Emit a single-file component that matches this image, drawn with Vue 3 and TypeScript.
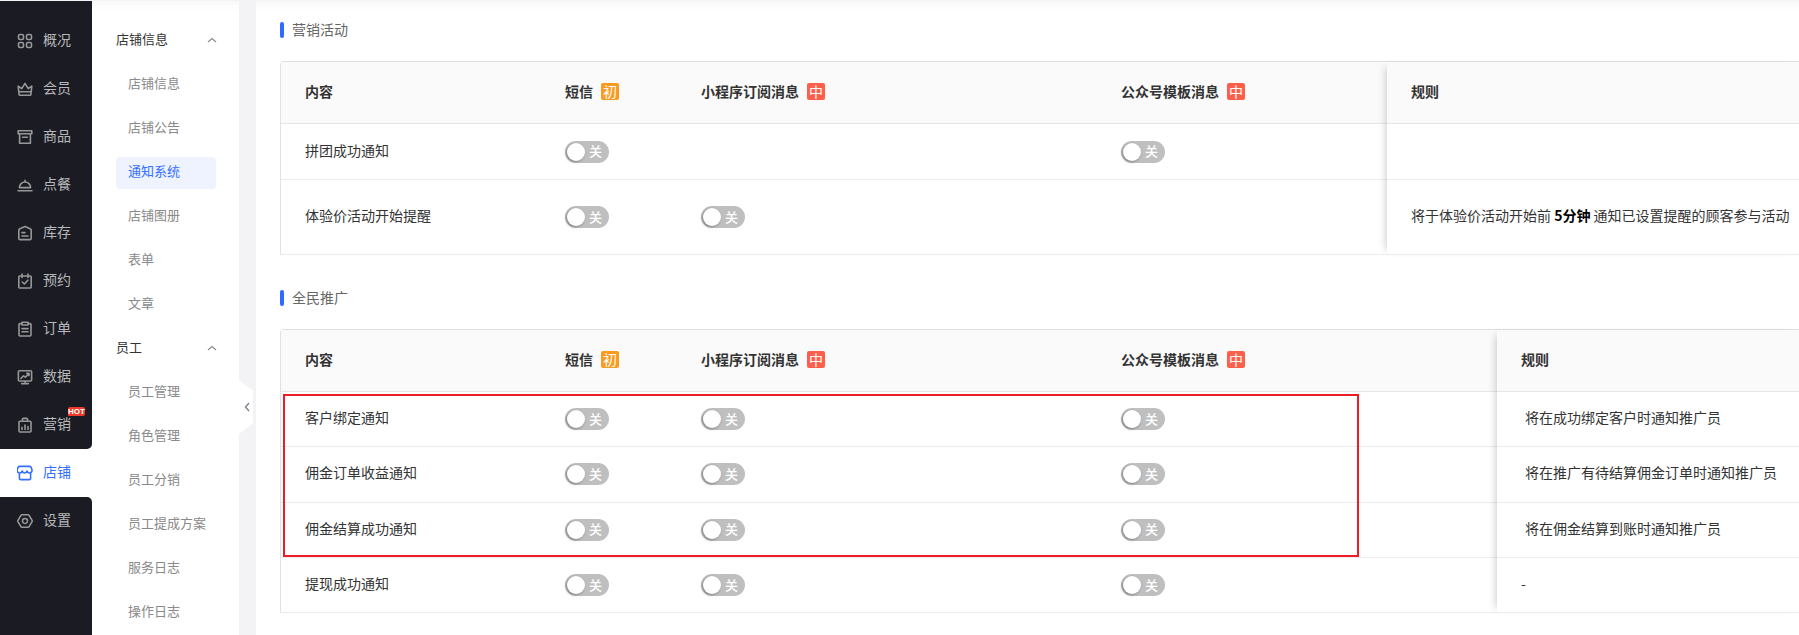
<script setup lang="ts">
interface RailItem {
  label: string
  icon: string
  hot?: boolean
}
interface NotifyRow {
  name: string
  switches: boolean[]
  rule?: string
  height: number
}

const icons = {
  overview:
    'M3 1.5h2a1.5 1.5 0 0 1 1.5 1.5v2A1.5 1.5 0 0 1 5 6.5H3A1.5 1.5 0 0 1 1.5 5V3A1.5 1.5 0 0 1 3 1.5ZM11 1.5h2A1.5 1.5 0 0 1 14.5 3v2A1.5 1.5 0 0 1 13 6.5h-2A1.5 1.5 0 0 1 9.5 5V3A1.5 1.5 0 0 1 11 1.5ZM3 9.5h2A1.5 1.5 0 0 1 6.5 11v2A1.5 1.5 0 0 1 5 14.5H3A1.5 1.5 0 0 1 1.5 13v-2A1.5 1.5 0 0 1 3 9.5ZM11 9.5h2a1.5 1.5 0 0 1 1.5 1.5v2a1.5 1.5 0 0 1-1.5 1.5h-2A1.5 1.5 0 0 1 9.5 13v-2A1.5 1.5 0 0 1 11 9.5Z',
  member: 'M1.2 5.2 4.8 7.6 8 2.4l3.2 5.2 3.6-2.4-.9 8.2a1 1 0 0 1-1 .9H3.1a1 1 0 0 1-1-.9ZM2.6 10.8h10.8',
  goods: 'M1.2 1.8h13.6v3H1.2ZM2.6 4.8v9.4h10.8V4.8M5.6 8.2h4.8',
  dining: 'M2.4 10.6a5.6 5.6 0 0 1 11.2 0ZM8 5V3.2M1 13.8h14',
  stock: 'M8 1.4 13.6 4a1 1 0 0 1 .6.9v8.7a1 1 0 0 1-1 1H2.8a1 1 0 0 1-1-1V4.9a1 1 0 0 1 .6-.9ZM5 7.6h3M5 11h6',
  booking: 'M2.8 3h10.4a1 1 0 0 1 1 1v10a1 1 0 0 1-1 1H2.8a1 1 0 0 1-1-1V4a1 1 0 0 1 1-1ZM5 1v3.4M11 1v3.4M5.2 9 7.4 11l3.4-3.8',
  order: 'M5 2.6H3a1 1 0 0 0-1 1V14a1 1 0 0 0 1 1h10a1 1 0 0 0 1-1V3.6a1 1 0 0 0-1-1h-2M5 1.2h6v2.8H5ZM5 7.6h6M5 10.8h6',
  data: 'M2.4 1.8h11.2a1 1 0 0 1 1 1V11a1 1 0 0 1-1 1H2.4a1 1 0 0 1-1-1V2.8a1 1 0 0 1 1-1ZM8 12v2.6M4.6 14.6h6.8M4 9.4l2.6-2.6 1.8 1.4L12 4.6M9.8 4.4H12v2.2',
  marketing: 'M3 4.2h10a1 1 0 0 1 1 1V14a1 1 0 0 1-1 1H3a1 1 0 0 1-1-1V5.2a1 1 0 0 1 1-1ZM5.4 4.2V2.4a1 1 0 0 1 1-1h3.2a1 1 0 0 1 1 1v1.8M5 12.4v-2M8 12.4V8M11 12.4V9.6',
  shop: 'M3.2 1.4h9.6a1.5 1.5 0 0 1 1.4 1l.8 2.6c.3 1.7-1 3-2.4 3-1.2 0-2.3-.8-2.6-2-.3 1.2-1.3 2-2.4 2s-2.1-.8-2.4-2c-.3 1.2-1.4 2-2.6 2-1.4 0-2.7-1.3-2.4-3l.8-2.6a1.5 1.5 0 0 1 1.4-1ZM2.4 8v5.6a1 1 0 0 0 1 1h9.2a1 1 0 0 0 1-1V8',
  settings: 'M4.8 1.8h6.4a.8.8 0 0 1 .7.4l3.3 5.4a.8.8 0 0 1 0 .8l-3.3 5.4a.8.8 0 0 1-.7.4H4.8a.8.8 0 0 1-.7-.4L.8 8.4a.8.8 0 0 1 0-.8l3.3-5.4a.8.8 0 0 1 .7-.4ZM8 5.5a2.5 2.5 0 1 0 0 5 2.5 2.5 0 0 0 0-5Z',
}

const railTop: RailItem[] = [
  { label: '概况', icon: icons.overview },
  { label: '会员', icon: icons.member },
  { label: '商品', icon: icons.goods },
  { label: '点餐', icon: icons.dining },
  { label: '库存', icon: icons.stock },
  { label: '预约', icon: icons.booking },
  { label: '订单', icon: icons.order },
  { label: '数据', icon: icons.data },
  { label: '营销', icon: icons.marketing, hot: true },
]

const subGroups = [
  { title: '店铺信息', items: ['店铺信息', '店铺公告', '通知系统', '店铺图册', '表单', '文章'] },
  { title: '员工', items: ['员工管理', '角色管理', '员工分销', '员工提成方案', '服务日志', '操作日志'] },
]

const columns = [
  { label: '短信', badge: '初', tone: 'orange' },
  { label: '小程序订阅消息', badge: '中', tone: 'red' },
  { label: '公众号模板消息', badge: '中', tone: 'red' },
]

const marketingRows: NotifyRow[] = [
  { name: '拼团成功通知', switches: [true, false, true], height: 56 },
  { name: '体验价活动开始提醒', switches: [true, true, false], height: 75 },
]

const promoRows: NotifyRow[] = [
  { name: '客户绑定通知', switches: [true, true, true], rule: '将在成功绑定客户时通知推广员', height: 55.33 },
  { name: '佣金订单收益通知', switches: [true, true, true], rule: '将在推广有待结算佣金订单时通知推广员', height: 55.33 },
  { name: '佣金结算成功通知', switches: [true, true, true], rule: '将在佣金结算到账时通知推广员', height: 55.33 },
  { name: '提现成功通知', switches: [true, true, true], height: 55.33 },
]
</script>

<template>
  <div class="page">
    <aside class="rail">
      <div class="rail-dark rail-top">
        <div v-for="item in railTop" :key="item.label" class="rail-item">
          <svg class="rail-icon" viewBox="0 0 16 16"><path :d="item.icon" /></svg>
          <span>{{ item.label }}</span>
          <em v-if="item.hot" class="hot">HOT</em>
        </div>
      </div>
      <div class="rail-item is-active">
        <svg class="rail-icon" viewBox="0 0 16 16"><path :d="icons.shop" /></svg>
        <span>店铺</span>
      </div>
      <div class="rail-dark rail-bottom">
        <div class="rail-item">
          <svg class="rail-icon" viewBox="0 0 16 16"><path :d="icons.settings" /></svg>
          <span>设置</span>
        </div>
      </div>
    </aside>

    <nav class="subnav">
      <section v-for="group in subGroups" :key="group.title">
        <div class="sub-title">
          <span>{{ group.title }}</span>
          <svg class="sub-arrow" viewBox="0 0 10 6"><path d="M1 5 5 1.5 9 5" /></svg>
        </div>
        <div
          v-for="item in group.items"
          :key="item"
          class="sub-item"
          :class="{ 'is-active': item === '通知系统' }"
        >
          <span>{{ item }}</span>
        </div>
      </section>
    </nav>

    <div class="gutter">
      <div class="collapse">
        <svg viewBox="0 0 6 10"><path d="M5 1 1.5 5 5 9" /></svg>
      </div>
    </div>

    <main class="main">
      <h3 class="section-title">营销活动</h3>
      <div class="tbl tbl-marketing">
        <div class="tbl-main">
          <div class="row row-head">
            <div class="cell cell-text">内容</div>
            <div v-for="col in columns" :key="col.label" class="cell cell-text">
              {{ col.label }}<i class="badge" :class="col.tone">{{ col.badge }}</i>
            </div>
          </div>
          <div v-for="row in marketingRows" :key="row.name" class="row" :style="{ height: row.height + 'px' }">
            <div class="cell cell-text">{{ row.name }}</div>
            <div v-for="(on, i) in row.switches" :key="i" class="cell">
              <span v-if="on" class="switch"><b class="knob"></b><span class="switch-text">关</span></span>
            </div>
          </div>
        </div>
        <div class="tbl-rule">
          <div class="rule-row row-head">规则</div>
          <div class="rule-row" style="height: 56px"></div>
          <div class="rule-row" style="height: 75px">
            将于体验价活动开始前&nbsp;<strong>5分钟</strong>&nbsp;通知已设置提醒的顾客参与活动
          </div>
        </div>
      </div>

      <h3 class="section-title second">全民推广</h3>
      <div class="tbl tbl-promo">
        <div class="tbl-main">
          <div class="row row-head">
            <div class="cell cell-text">内容</div>
            <div v-for="col in columns" :key="col.label" class="cell cell-text">
              {{ col.label }}<i class="badge" :class="col.tone">{{ col.badge }}</i>
            </div>
          </div>
          <div v-for="row in promoRows" :key="row.name" class="row" :style="{ height: row.height + 'px' }">
            <div class="cell cell-text">{{ row.name }}</div>
            <div v-for="(on, i) in row.switches" :key="i" class="cell">
              <span v-if="on" class="switch"><b class="knob"></b><span class="switch-text">关</span></span>
            </div>
          </div>
        </div>
        <div class="tbl-rule">
          <div class="rule-row row-head">规则</div>
          <div
            v-for="row in promoRows"
            :key="row.name"
            class="rule-row"
            :class="{ indented: row.rule }"
            :style="{ height: row.height + 'px' }"
          >
            {{ row.rule ?? '-' }}
          </div>
        </div>
        <div class="highlight"></div>
      </div>
    </main>
  </div>
</template>

<style>
html,
body {
  margin: 0;
  overflow: hidden;
}
</style>

<style scoped>
.page {
  display: flex;
  width: 1799px;
  height: 635px;
  box-sizing: border-box;
  padding-top: 1px;
  overflow: hidden;
  background: #f3f3f6;
  font-family: "Noto Sans CJK SC", "Noto Sans", sans-serif;
  font-size: 14px;
  color: #333;
}
.rail {
  display: flex;
  flex-direction: column;
  flex: none;
  width: 92px;
  background: #fff;
}
.rail-dark {
  background: #1b1c23;
}
.rail-top {
  padding-top: 16px;
  border-bottom-right-radius: 5px;
}
.rail-bottom {
  flex: 1;
  border-top-right-radius: 5px;
}
.rail-item {
  position: relative;
  display: flex;
  align-items: center;
  gap: 10px;
  height: 48px;
  padding-left: 17px;
  color: #b8b8ba;
}
.rail-item span {
  padding-bottom: 4px;
}
.rail-item.is-active {
  color: #3370ff;
}
.rail-icon {
  flex: none;
  width: 16px;
  height: 16px;
  fill: none;
  stroke: #979798;
  stroke-width: 1.6;
  stroke-linejoin: round;
  stroke-linecap: round;
}
.is-active .rail-icon {
  stroke: #3370ff;
}
.hot {
  position: absolute;
  left: 68px;
  top: 6px;
  width: 17px;
  height: 9px;
  border-radius: 2px 2px 2px 0;
  background: #f0392b;
  color: #fff;
  font: 700 8px/9px "Liberation Sans", sans-serif;
  text-align: center;
}
.subnav {
  flex: none;
  box-sizing: border-box;
  width: 147px;
  padding: 17px 23px 0 24px;
  background: linear-gradient(#fafafa, #fff 10px);
  font-size: 13px;
}
.sub-title {
  display: flex;
  align-items: center;
  justify-content: space-between;
  height: 44px;
  color: #333;
}
.sub-title span,
.sub-item span {
  padding-bottom: 4px;
}
.sub-arrow {
  width: 10px;
  height: 6px;
  margin-right: -1px;
  fill: none;
  stroke: #8c8c8c;
  stroke-width: 1.2;
}
.sub-item {
  display: flex;
  align-items: center;
  height: 44px;
  padding-left: 12px;
  color: #8a8a8a;
  white-space: nowrap;
}
.sub-item.is-active {
  position: relative;
  color: #3370ff;
}
.sub-item.is-active span {
  position: relative;
}
.sub-item.is-active::before {
  content: "";
  position: absolute;
  left: 0;
  right: 0;
  top: 7px;
  height: 32px;
  border-radius: 4px;
  background: #eef3ff;
}
.gutter {
  position: relative;
  flex: none;
  width: 17px;
}
.collapse {
  position: absolute;
  left: 0;
  top: 379px;
  display: flex;
  align-items: center;
  box-sizing: border-box;
  width: 14px;
  height: 54px;
  padding-left: 5px;
  background: #fff;
  clip-path: polygon(0 0, 100% 20%, 100% 80%, 0 100%);
}
.collapse svg {
  width: 6px;
  height: 10px;
  fill: none;
  stroke: #7a7f8c;
  stroke-width: 1.3;
}
.main {
  flex: 1;
  min-width: 0;
  padding: 21px 0 0 24px;
  overflow: hidden;
  background: linear-gradient(#f8f8f8, #fff 10px);
}
.section-title {
  position: relative;
  display: flex;
  align-items: center;
  box-sizing: border-box;
  height: 16px;
  margin: 0 0 23px;
  padding: 0 0 2px 12px;
  color: #666;
  font-size: 14px;
  font-weight: 400;
}
.section-title::before {
  content: "";
  position: absolute;
  left: 0;
  top: 0;
  width: 4px;
  height: 16px;
  border-radius: 2px;
  background: #2f6bff;
}
.section-title.second {
  margin-top: 35px;
}
.tbl {
  position: relative;
  display: flex;
  border-top: 1px solid #dedee0;
  border-left: 1px solid #e2e2e6;
  border-top-left-radius: 4px;
}
.tbl-main {
  flex: none;
}
.tbl-marketing .tbl-main {
  width: 1106px;
}
.tbl-promo .tbl-main {
  width: 1216px;
}
.tbl-rule {
  position: relative;
  flex: 1;
  min-width: 0;
  box-shadow: -6px 0 8px -5px rgba(0, 0, 0, 0.2);
}
.row {
  display: grid;
  grid-template-columns: 260px 136px 420px 1fr;
  align-items: center;
  box-sizing: border-box;
  border-bottom: 1px solid #ececee;
}
.row-head {
  height: 62px;
  background: #fafafa;
  border-bottom-color: #e6e6e8;
  font-weight: 700;
}
.cell {
  display: flex;
  align-items: center;
  padding-left: 24px;
  white-space: nowrap;
}
.cell-text {
  padding-bottom: 4px;
}
.rule-row {
  display: flex;
  align-items: center;
  box-sizing: border-box;
  padding: 0 0 4px 24px;
  border-bottom: 1px solid #ececee;
  white-space: nowrap;
}
.rule-row.row-head {
  border-bottom-color: #e6e6e8;
}
.rule-row.indented {
  padding-left: 28px;
}
.rule-row strong {
  color: #000;
}
.badge {
  display: inline-block;
  width: 18px;
  height: 17px;
  margin: 2px 0 0 8px;
  border-radius: 2px;
  color: #fff;
  font-style: normal;
  font-weight: 400;
  font-size: 14px;
  line-height: 16px;
  text-align: center;
}
.badge.orange {
  background: #fa9a1f;
}
.badge.red {
  background: #ff5f4a;
}
.switch {
  display: flex;
  align-items: center;
  gap: 4px;
  box-sizing: border-box;
  width: 44px;
  height: 22px;
  padding-left: 2px;
  border-radius: 11px;
  background: #bfbfbf;
  color: #fff;
  font-size: 13px;
}
.switch-text {
  padding-bottom: 2px;
  font-weight: 500;
}
.knob {
  flex: none;
  width: 18px;
  height: 18px;
  border-radius: 50%;
  background: #fff;
  box-shadow: -1px 1px 3px rgba(0, 0, 0, 0.35);
}
.highlight {
  position: absolute;
  left: 2px;
  top: 64px;
  box-sizing: border-box;
  width: 1076px;
  height: 163px;
  border: 2px solid #ee1c25;
  pointer-events: none;
}
</style>
